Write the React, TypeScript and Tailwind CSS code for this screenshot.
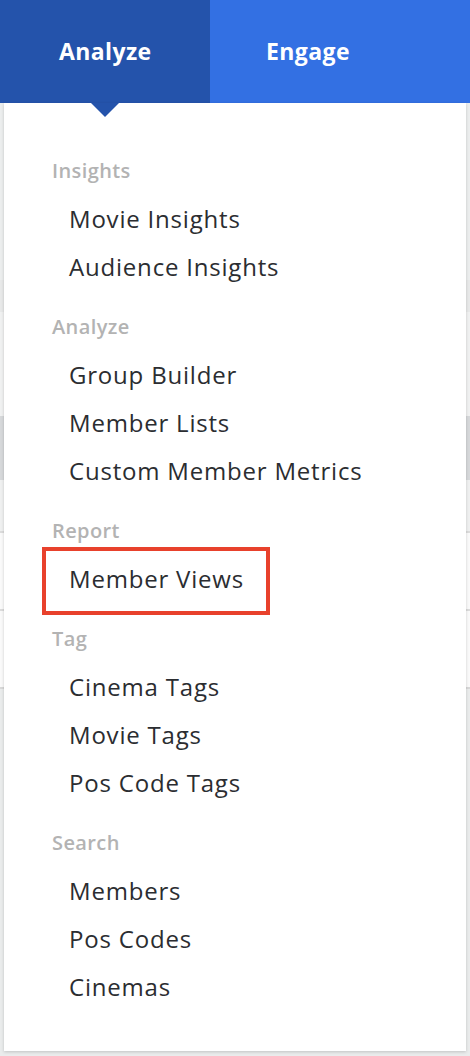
import React from 'react';

type Group = { title: string; items: string[] };

const groups: Group[] = [
  { title: 'Insights', items: ['Movie Insights', 'Audience Insights'] },
  { title: 'Analyze', items: ['Group Builder', 'Member Lists', 'Custom Member Metrics'] },
  { title: 'Report', items: ['Member Views'] },
  { title: 'Tag', items: ['Cinema Tags', 'Movie Tags', 'Pos Code Tags'] },
  { title: 'Search', items: ['Members', 'Pos Codes', 'Cinemas'] },
];

const font = { fontFamily: '"Open Sans", "Noto Sans", sans-serif' };

export default function App() {
  return (
    <div className="relative w-[470px] h-[1056px] overflow-hidden bg-[#eceeee]" style={font}>
      {/* page underneath the open menu */}
      <div className="flex flex-col pt-[103px]">
        <div className="h-[177px] bg-[#eceeee]" />
        <div className="h-[32px] bg-[#e8e9e9]" />
        <div className="h-[104px] bg-[#f0f1f1]" />
        <div className="h-[64px] bg-[#d6d8da]" />
        <div className="h-[53px] bg-[#eff0f0] border-b-2 border-[#dcdcdc]" />
        <div className="h-[78px] bg-[#fafafa] border-b-2 border-[#dcdcdc]" />
        <div className="h-[78px] bg-[#fafafa] border-b-2 border-[#d8d8d8]" />
        <div className="h-[400px] bg-[#eaecec]" />
      </div>

      {/* top navigation */}
      <div className="absolute inset-x-0 top-0 flex h-[103px] bg-[#3370e3] text-white">
        <div className="relative flex items-center bg-[#2453ab] pl-[59px] w-[210px]">
          <span className="text-[23px] font-bold tracking-[0.4px] pb-[1px]">Analyze</span>
          <div className="absolute left-[105px] top-full -translate-x-1/2 w-0 h-0 border-l-[14px] border-r-[14px] border-t-[14px] border-l-transparent border-r-transparent border-t-[#2453ab] z-10" />
        </div>
        <div className="flex items-center pl-[56px]">
          <span className="text-[23px] font-bold tracking-[0.4px] pb-[1px]">Engage</span>
        </div>
      </div>

      {/* dropdown panel */}
      <div className="absolute left-[4px] top-[103px] w-[462px] bg-white shadow-[0_1px_3px_rgba(0,0,0,0.18)] pt-[44px] pb-[40px] flex flex-col gap-[12px]">
        {groups.map((g) => (
          <div key={g.title} className="flex flex-col">
            <div className="h-[48px] flex items-center pl-[48px] text-[20px] text-[#b3b3b3] font-semibold tracking-[0.4px]">
              {g.title}
            </div>
            {g.items.map((item) => (
              <div key={item} className="relative h-[48px] flex items-center pl-[65px] text-[24px] text-[#2b2d31] tracking-[0.8px]">
                {item}
                {item === 'Member Views' && (
                  <div className="absolute left-[38px] top-[-8px] w-[228px] h-[68px] border-[4px] border-[#e8412c]" />
                )}
              </div>
            ))}
          </div>
        ))}
      </div>
    </div>
  );
}
